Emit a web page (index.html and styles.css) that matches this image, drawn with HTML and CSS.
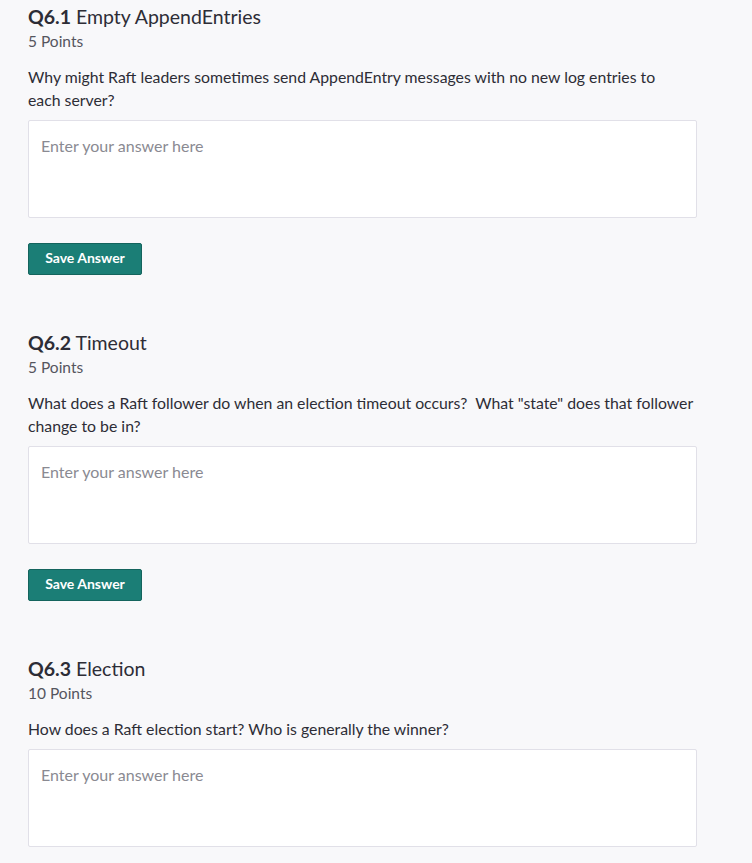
FILE: index.html
```html
<!DOCTYPE html>
<html>
<head>
<meta charset="utf-8">
<link rel="stylesheet" href="styles.css">
</head>
<body>
<main class="page">
  <section class="question">
    <h2 class="q-title"><b>Q6.1</b> Empty AppendEntries</h2>
    <div class="q-points">5 Points</div>
    <p class="q-text q-text--narrow">Why might Raft leaders sometimes send AppendEntry messages with no new log entries to each server?</p>
    <textarea class="answer" placeholder="Enter your answer here"></textarea>
    <button class="save">Save Answer</button>
  </section>
  <section class="question">
    <h2 class="q-title"><b>Q6.2</b> Timeout</h2>
    <div class="q-points">5 Points</div>
    <p class="q-text">What does a Raft follower do when an election timeout occurs?&nbsp; What "state" does that follower change to be in?</p>
    <textarea class="answer" placeholder="Enter your answer here"></textarea>
    <button class="save">Save Answer</button>
  </section>
  <section class="question">
    <h2 class="q-title"><b>Q6.3</b> Election</h2>
    <div class="q-points">10 Points</div>
    <p class="q-text">How does a Raft election start? Who is generally the winner?</p>
    <textarea class="answer" placeholder="Enter your answer here"></textarea>
  </section>
</main>
</body>
</html>
```
FILE: styles.css
```css
html, body {
  margin: 0;
  padding: 0;
  background: #f8f8fa;
}
body {
  font-family: Lato, "Liberation Sans", sans-serif;
  color: #2d2d36;
  overflow: hidden;
  height: 863px;
}
.page {
  padding: 4px 55px 0 28px;
  display: flex;
  flex-direction: column;
  gap: 55px;
}
.question {
  display: flex;
  flex-direction: column;
  align-items: flex-start;
}
.q-title {
  margin: 0;
  font-size: 19.5px;
  line-height: 26px;
  font-weight: 400;
  color: #2d2d36;
}
.q-title b {
  font-weight: 700;
}
.q-points {
  font-size: 15.5px;
  line-height: 22px;
  color: #55555e;
}
.q-text {
  margin: 13px 0 9px;
  font-size: 15.8px;
  line-height: 23px;
}
.q-text--narrow {
  max-width: 650px;
}
.answer {
  box-sizing: border-box;
  width: 669px;
  height: 98px;
  resize: none;
  border: 1px solid #e1e0e8;
  border-radius: 2px;
  background: #fff;
  padding: 15px 12px 13px;
  font-family: inherit;
  font-size: 16px;
  line-height: 20px;
  color: #2d2d36;
}
.answer::placeholder {
  color: #8a8a92;
}
.save {
  margin-top: 25px;
  box-sizing: border-box;
  width: 114px;
  height: 32px;
  background: #1b7e76;
  border: 1px solid #14645d;
  border-radius: 2px;
  color: #fff;
  font-family: inherit;
  font-size: 14px;
  font-weight: 700;
  padding: 0 0 3px;
}
```
